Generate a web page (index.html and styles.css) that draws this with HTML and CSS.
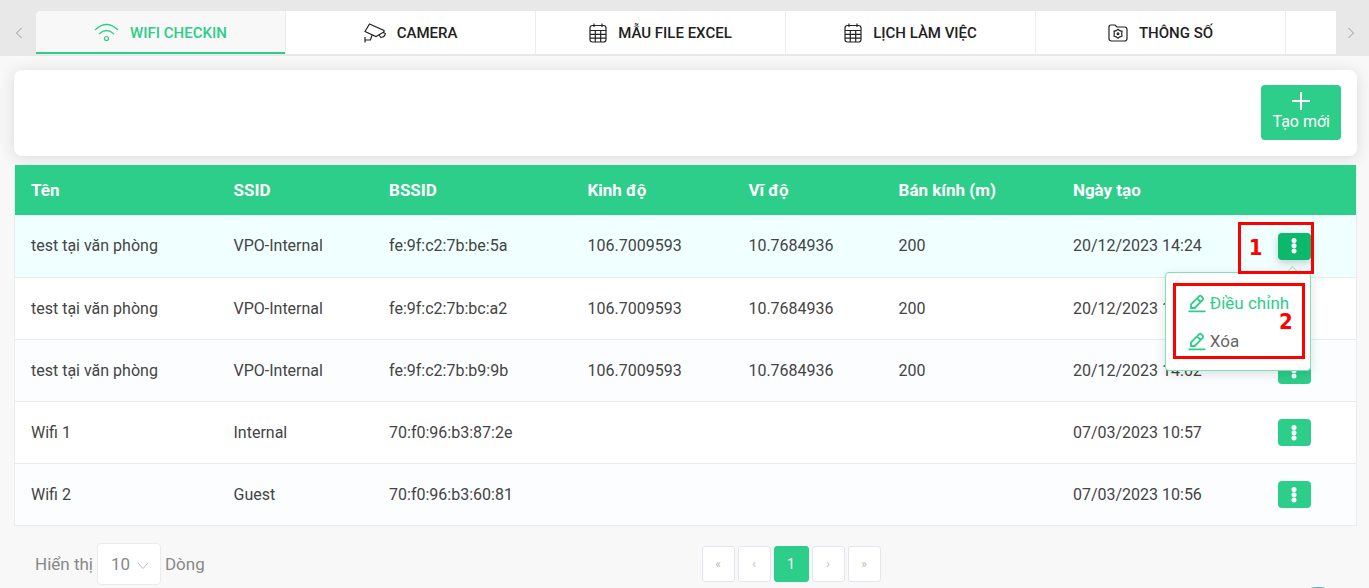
FILE: index.html
```html
<!DOCTYPE html>
<html lang="vi">
<head>
<meta charset="utf-8">
<title>Wifi Checkin</title>
<meta name="viewport" content="width=device-width, initial-scale=1">
<link rel="stylesheet" href="styles.css">
</head>
<body>
<svg class="defs" aria-hidden="true">
  <symbol id="i-dots" viewBox="0 0 6 18"><circle cx="3" cy="3.500" r="2.500"/><circle cx="3" cy="8.800" r="2.500"/><circle cx="3" cy="14.100" r="2.500"/></symbol>
  <symbol id="i-pen" viewBox="0 0 18 20"><path d="M3 15V11.3L11 3.3Q12.2 2.2 13.4 3.3L14.7 4.6Q15.8 5.8 14.7 7L6.7 15ZM9 5.3L12.7 9M.5 18.3H17.5"/></symbol>
  <symbol id="i-cal" viewBox="0 0 18 20"><path d="M5 .5V4M13 .5V4M3.500 2.500H14.500Q17 2.500 17 5V16.500Q17 19 14.500 19H3.500Q1 19 1 16.500V5Q1 2.500 3.500 2.500ZM1 7.500H17M1 11.300H17M1 15.100H17M6.300 7.500V19M11.700 7.500V19"/></symbol>
</svg>
<nav class="tabs">
  <button class="scroll" aria-label="Trước"><svg width="8" height="12" viewBox="0 0 8 12"><path d="M6.500 1L1.500 6L6.500 11"/></svg></button>
  <div class="tab-list">
    <button class="tab active"><svg width="25" height="20" viewBox="0 0 25 20"><path d="M1 7Q12.500-4 24 7M5 11Q12.500 4 20 11"/><circle cx="12.500" cy="15.500" r="2"/></svg>WIFI CHECKIN</button>
    <button class="tab"><svg width="22" height="20" viewBox="0 0 22 20"><path d="M5.500 1L20 7.500Q20.500 9 19 9.500L12 13.500L1 8.500ZM15 12L17 14.500Q21 14 21.300 10.500L19.500 9.500M8 12L6.500 17H1M1 14V19.500"/></svg>CAMERA</button>
    <button class="tab"><svg width="18" height="20"><use href="#i-cal"/></svg>MẪU FILE EXCEL</button>
    <button class="tab"><svg width="18" height="20"><use href="#i-cal"/></svg>LỊCH LÀM VIỆC</button>
    <button class="tab"><svg width="20" height="18" viewBox="0 0 20 18"><path d="M3 1H7L9 3H16.500Q19 3 19 5.500V14.500Q19 17 16.500 17H3.500Q1 17 1 14.500V3Q1 1 3 1ZM10 5.300L11.800 6.700L14 7.300L13.700 9.800L14 12.200L11.800 12.900L10 14.300L8.200 12.900L6 12.200L6.300 9.800L6 7.300L8.200 6.700Z"/><circle cx="10" cy="9.800" r=".9"/></svg>THÔNG SỐ</button>
    <button class="tab" aria-label="Tab khác"></button>
  </div>
  <button class="scroll" aria-label="Sau"><svg width="8" height="12" viewBox="0 0 8 12"><path d="M1.500 1L6.500 6L1.500 11"/></svg></button>
</nav>
<main class="content">
  <section class="toolbar">
    <button class="create"><svg width="18" height="18" viewBox="0 0 18 18"><path d="M9 0V18M0 9H18"/></svg>Tạo mới</button>
  </section>
  <table class="grid">
    <colgroup><col class="c-name"><col class="c-ssid"><col class="c-bssid"><col class="c-lng"><col class="c-lat"><col class="c-rad"><col class="c-date"><col class="c-act"></colgroup>
    <thead><tr><th>Tên</th><th>SSID</th><th>BSSID</th><th>Kinh độ</th><th>Vĩ độ</th><th>Bán kính (m)</th><th>Ngày tạo</th><th></th></tr></thead>
    <tbody>
      <tr class="selected"><td>test tại văn phòng</td><td>VPO-Internal</td><td>fe:9f:c2:7b:be:5a</td><td>106.7009593</td><td>10.7684936</td><td>200</td><td>20/12/2023 14:24</td>
        <td class="act"><div class="anchor"><button class="more open" aria-label="Thao tác"><svg width="6" height="18"><use href="#i-dots"/></svg></button>
          <div class="menu">
            <button class="item current"><svg width="18" height="20"><use href="#i-pen"/></svg>Điều chỉnh</button>
            <button class="item"><svg width="18" height="20"><use href="#i-pen"/></svg>Xóa</button>
          </div>
          <div class="mark mark-one">1</div>
          <div class="mark mark-two">2</div>
        </div></td></tr>
      <tr><td>test tại văn phòng</td><td>VPO-Internal</td><td>fe:9f:c2:7b:bc:a2</td><td>106.7009593</td><td>10.7684936</td><td>200</td><td>20/12/2023 14:02</td><td class="act"><button class="more" aria-label="Thao tác"><svg width="6" height="18"><use href="#i-dots"/></svg></button></td></tr>
      <tr><td>test tại văn phòng</td><td>VPO-Internal</td><td>fe:9f:c2:7b:b9:9b</td><td>106.7009593</td><td>10.7684936</td><td>200</td><td>20/12/2023 14:02</td><td class="act"><button class="more" aria-label="Thao tác"><svg width="6" height="18"><use href="#i-dots"/></svg></button></td></tr>
      <tr><td>Wifi 1</td><td>Internal</td><td>70:f0:96:b3:87:2e</td><td></td><td></td><td></td><td>07/03/2023 10:57</td><td class="act"><button class="more" aria-label="Thao tác"><svg width="6" height="18"><use href="#i-dots"/></svg></button></td></tr>
      <tr><td>Wifi 2</td><td>Guest</td><td>70:f0:96:b3:60:81</td><td></td><td></td><td></td><td>07/03/2023 10:56</td><td class="act"><button class="more" aria-label="Thao tác"><svg width="6" height="18"><use href="#i-dots"/></svg></button></td></tr>
    </tbody>
  </table>
  <footer class="footer">
    <div class="page-size">
      <label for="size">Hiển thị</label>
      <span class="select"><select id="size"><option>10</option></select><svg width="12" height="8" viewBox="0 0 12 8"><path d="M1 1L6 6.500L11 1"/></svg></span>
      <span>Dòng</span>
    </div>
    <div class="pager">
      <button aria-label="Trang đầu">«</button><button aria-label="Trang trước">‹</button><button class="on">1</button><button aria-label="Trang sau">›</button><button aria-label="Trang cuối">»</button>
    </div>
  </footer>
</main>
<button class="chat" aria-label="Trò chuyện"></button>
</body>
</html>
```
FILE: styles.css
```css
* { box-sizing: border-box; }
body {
  margin: 0;
  height: 100vh;
  overflow: hidden;
  background: #f8f8f8;
  color: #444;
  font: 16px/24px Roboto, sans-serif;
}
button, select { font: inherit; color: inherit; margin: 0; padding: 0; border: 0; background: none; }
svg { fill: none; stroke: currentColor; flex: none; }
.defs { position: absolute; width: 0; height: 0; }

.tabs { display: flex; height: 56px; padding: 11px 0 2px; background: #e8e8e8; }
.scroll { flex: none; width: 36px; padding-left: 2px; color: #999; display: flex; align-items: center; justify-content: center; }
.tabs .scroll:last-child { width: 33px; padding: 0 3px 0 0; }
.tab-list { flex: 1; display: flex; overflow: hidden; border-radius: 5px 0 0 0; background: #fff; }
.tab {
  flex: none;
  width: 250px;
  display: flex;
  align-items: center;
  justify-content: center;
  gap: 11px;
  border-right: 1px solid #ebebf2;
  color: #222;
  font-size: 15px;
  font-weight: 500;
  background: #fff;
}
.tab svg { stroke-width: 1.2; }
.tab.active { color: #2dce89; background: #f8f8f8; box-shadow: inset 0 -2px #2dce89; }

.content { padding: 14px 12px 0 14px; }
.toolbar {
  display: flex;
  justify-content: flex-end;
  padding: 15px 16px 16px;
  margin-bottom: 9px;
  border-radius: 8px;
  background: #fff;
  box-shadow: 0 2px 16px rgba(0, 0, 0, .12);
}
.create {
  display: flex;
  flex-direction: column;
  align-items: center;
  padding: 7px 11px 6px;
  border-radius: 4px;
  background: #2dce89;
  color: #fff;
}
.create svg { stroke-width: 2; }

.grid {
  width: 100%;
  table-layout: fixed;
  border-collapse: separate;
  border-spacing: 0;
  border: 1px solid #e9ecef;
  border-top: 0;
  background: #fff;
  position: relative;
}
.c-name { width: 15.1%; }
.c-ssid { width: 11.6%; }
.c-bssid { width: 14.8%; }
.c-lng { width: 12%; }
.c-lat { width: 11.2%; }
.c-rad { width: 13%; }
.c-date { width: 13.1%; }
.c-act { width: 9.2%; }
th, td { padding: 0 16px; text-align: left; white-space: nowrap; }
th { height: 50px; background: #2dce89; color: #fff; font-size: 17px; font-weight: 700; }
td { height: 62px; border-bottom: 1px solid #e9ecef; }
tbody tr:nth-child(odd) td { background: #fbfdff; }
tbody tr:last-child td { border-bottom: 0; }
tbody .selected td { height: 63px; background: #f0ffff; }
tbody tr.selected:nth-child(odd) td { background: #f0ffff; }
tbody tr:last-child td { height: 61px; }
.act { padding: 0; text-align: center; }
.anchor { position: relative; display: inline-block; vertical-align: middle; z-index: 2; }
.more {
  display: inline-flex;
  align-items: center;
  justify-content: center;
  width: 33px;
  height: 27px;
  border-radius: 4px;
  background: #2dce89;
  color: #fff;
  vertical-align: middle;
}
.more svg { fill: currentColor; stroke: none; }
.more.open { background: #0cb96c; box-shadow: 0 3px 8px rgba(0, 0, 0, .2); }

.menu {
  position: absolute;
  top: 39px;
  right: 0;
  width: 146px;
  padding: 11px 0 10px 22px;
  border: 1px solid #7fe0b6;
  border-radius: 4px;
  background: #fff;
  box-shadow: 0 3px 12px rgba(0, 0, 0, .12);
}
.menu::before {
  content: "";
  position: absolute;
  top: -5px;
  right: 13px;
  width: 8px;
  height: 8px;
  border: 1px solid #7fe0b6;
  border-width: 1px 0 0 1px;
  background: #fff;
  transform: rotate(45deg);
}
.item { display: flex; align-items: center; gap: 4px; height: 38px; font-size: 17px; color: #666; }
.item.current { color: #2dce89; }
.item svg { color: #2dce89; stroke-width: 1.8; }
.mark {
  position: absolute;
  border: 3px solid #f00;
  color: #f00;
  font: 700 22px/26px "DejaVu Sans Condensed", "DejaVu Sans", sans-serif;
  pointer-events: none;
}
.mark-one { top: -11px; right: -3px; width: 76px; height: 52px; padding: 10px 8px; text-align: left; }
.mark-two { top: 50px; right: 6px; width: 132px; height: 76px; padding: 23px 9px; text-align: right; }

.footer { display: grid; grid-template-columns: 1fr 1fr; align-items: center; padding-top: 17px; }
.page-size { display: flex; align-items: center; gap: 4px; padding-left: 21px; font-size: 17px; color: #888; }
.select { position: relative; display: block; }
.select select {
  display: block;
  appearance: none;
  width: 64px;
  height: 42px;
  padding: 0 0 0 13px;
  border: 1px solid #e9ecef;
  border-radius: 4px;
  background: #fff;
}
.select svg { position: absolute; right: 12px; top: 19px; color: #bbc; pointer-events: none; }
.pager { display: flex; gap: 3px; padding-left: 16px; }
.pager button {
  width: 33px;
  height: 36px;
  border: 1px solid #e3e6ee;
  border-radius: 3px;
  background: #fff;
  color: #bbb;
  font-size: 12px;
}
.pager .on { width: 35px; border-color: #2dce89; background: #2dce89; color: #fff; font-size: 14px; }
.chat {
  position: fixed;
  right: 21px;
  bottom: -59px;
  width: 60px;
  height: 60px;
  border-radius: 50%;
  background: #3aa8c1;
}
```
